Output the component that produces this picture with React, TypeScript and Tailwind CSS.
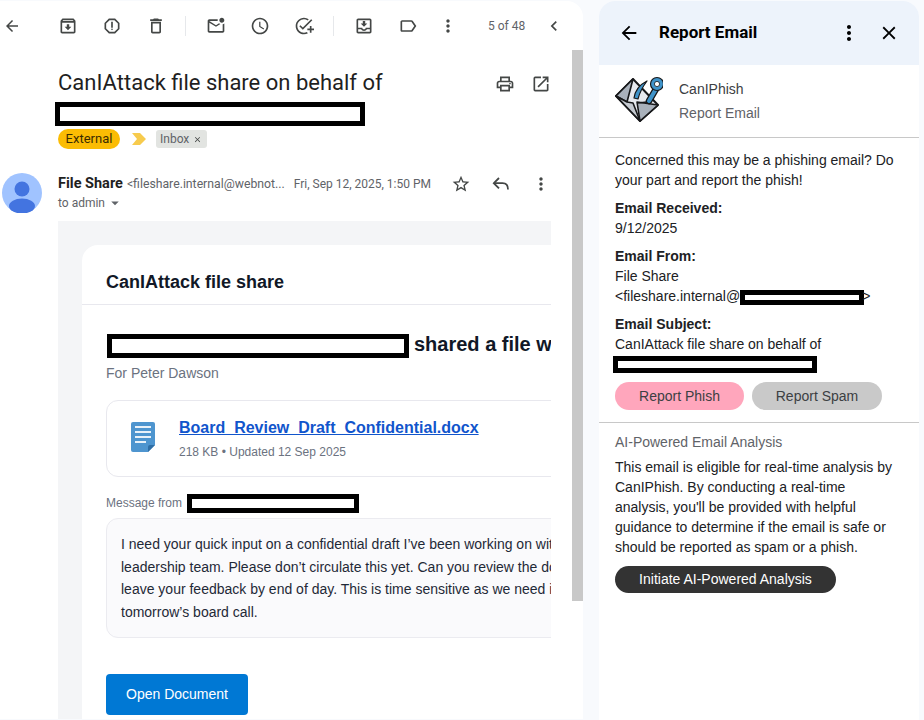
import React from 'react';
import {
  MdArrowBack,
  MdArrowDropDown,
  MdChevronLeft,
  MdClose,
  MdMoreVert,
  MdOpenInNew,
  MdOutlineAddTask,
  MdOutlineArchive,
  MdOutlineDelete,
  MdOutlineLabel,
  MdOutlineMarkEmailUnread,
  MdOutlineMoveToInbox,
  MdOutlinePrint,
  MdOutlineReport,
  MdOutlineWatchLater,
  MdStarBorder,
} from 'react-icons/md';

const ToolIcon: React.FC<{ icon: React.ElementType }> = ({ icon: Icon }) => (
  <div className="w-11 flex justify-center text-[#444746]">
    <Icon size={20} />
  </div>
);

const Avatar = () => (
  <svg width="40" height="40" viewBox="0 0 40 40" className="shrink-0">
    <circle cx="20" cy="20" r="20" fill="#a0c3ff" />
    <circle cx="20" cy="16" r="7.5" fill="#4374e0" />
    <ellipse cx="20" cy="33" rx="13" ry="7.5" fill="#4374e0" />
  </svg>
);

const DocIcon = () => (
  <svg width="24" height="30" viewBox="0 0 24 30" className="shrink-0">
    <path d="M2 0h20a2 2 0 0 1 2 2v21l-7 7H2a2 2 0 0 1-2-2V2a2 2 0 0 1 2-2z" fill="#4e95cf" />
    <path d="M24 23l-7 7v-5a2 2 0 0 1 2-2z" fill="#2f6ea5" />
    <path d="M4 5h16M4 10h16M4 15h16M4 20h11" stroke="#e8f1f9" strokeWidth="1.8" />
  </svg>
);

const ReplyIcon = () => (
  <svg width="20" height="20" viewBox="0 0 20 20" fill="none" stroke="#444746" strokeWidth="1.8">
    <path d="M8 4 2.8 9.2 8 14.4" />
    <path d="M3 9.2h8.5c3.2 0 5.5 2.2 5.5 6.3" />
  </svg>
);

const PhishLogo = () => (
  <svg width="50" height="48" viewBox="0 0 50 48" className="shrink-0">
    <path d="M20 4 3 21l24 25 18-16z" fill="#e6e9ee" stroke="#17181a" strokeWidth="2" strokeLinejoin="round" />
    <path d="M20 4 3 21l11 6z" fill="#a9b1bb" stroke="#17181a" strokeWidth="1.6" strokeLinejoin="round" />
    <path d="M3 21l24 25-7-18-6-1z" fill="#c5cad1" stroke="#17181a" strokeWidth="1.6" strokeLinejoin="round" />
    <path d="M27 46l18-16-21-3z" fill="#a9b1bb" stroke="#17181a" strokeWidth="1.6" strokeLinejoin="round" />
    <path d="M25 28l9-1" stroke="#17181a" strokeWidth="1.6" />
    <path d="M36 26 43 14" stroke="#17181a" strokeWidth="6.5" strokeLinecap="round" />
    <path d="M36 26 43 14" stroke="#3f93c9" strokeWidth="4" strokeLinecap="round" />
    <circle cx="44" cy="9" r="6.5" fill="#3f93c9" stroke="#17181a" strokeWidth="1.2" />
    <circle cx="44" cy="9" r="2.6" fill="#ffffff" stroke="#17181a" strokeWidth="0.8" />
    <path d="M21 23c1-7 5-13 13-17-3 4-7 10-9 18z" fill="#3f93c9" stroke="#17181a" strokeWidth="1.2" strokeLinejoin="round" />
  </svg>
);

const MailPane = () => (
  <section className="w-[583px] shrink-0 h-[718px] bg-white rounded-tr-2xl overflow-hidden flex flex-col font-['Roboto',sans-serif]">
    <div className="h-[49px] shrink-0 flex items-center">
      <div className="w-[24px] pl-[3px] text-[#444746]">
        <MdArrowBack size={18} />
      </div>
      <div className="ml-[22px] flex items-center">
        <ToolIcon icon={MdOutlineArchive} />
        <ToolIcon icon={MdOutlineReport} />
        <ToolIcon icon={MdOutlineDelete} />
        <div className="ml-[7px] mr-[8px] w-px h-5 bg-[#e6e8eb]" />
        <ToolIcon icon={MdOutlineMarkEmailUnread} />
        <ToolIcon icon={MdOutlineWatchLater} />
        <ToolIcon icon={MdOutlineAddTask} />
        <div className="ml-[7px] mr-[8px] w-px h-5 bg-[#e6e8eb]" />
        <ToolIcon icon={MdOutlineMoveToInbox} />
        <ToolIcon icon={MdOutlineLabel} />
        <div className="-ml-[4px]">
          <ToolIcon icon={MdMoreVert} />
        </div>
      </div>
      <span className="ml-[18px] text-[12px] text-[#5f6368]">5 of 48</span>
      <MdChevronLeft size={20} className="ml-[19px] text-[#444746]" />
    </div>

    <div className="flex flex-1 min-h-0">
      <div className="w-[572px] shrink-0 overflow-hidden">
        <div className="pl-[58px] pr-[21px] pt-[19px]">
          <div className="flex items-start justify-between">
            <h1 className="text-[22px] leading-[28px] text-[#1f1f1f]">CanIAttack file share on behalf of</h1>
            <div className="flex gap-4 pt-[5px] text-[#444746]">
              <MdOutlinePrint size={20} />
              <MdOpenInNew size={20} />
            </div>
          </div>
          <div className="-ml-[3px] mt-[5px] w-[310px] h-[24px] border-[5px] border-black bg-white" />
          <div className="mt-[3px] flex items-center h-[20px]">
            <span className="h-[20px] w-[62px] rounded-full bg-[#fbbc04] text-[13px] leading-[20px] text-center text-[#3c2c00]">External</span>
            <svg width="14" height="12" viewBox="0 0 14 12" className="ml-[12px]">
              <path d="M0 0h8l6 6-6 6H0l5-6z" fill="#f7cb4d" />
            </svg>
            <span className="ml-[10px] h-[18px] w-[51px] rounded-[3px] bg-[#e2e4e1] pl-[4px] text-[12px] leading-[18px] text-[#5f6368] flex items-center gap-1">
              Inbox
              <MdClose size={9} className="text-[#444746]" />
            </span>
          </div>
        </div>

        <div className="mt-[24px] flex pl-[2px] pr-[21px]">
          <Avatar />
          <div className="ml-[16px] pt-px flex-1 min-w-0">
            <div className="flex items-center h-[20px] whitespace-nowrap">
              <span className="text-[14.5px] font-bold text-[#1f1f1f]">File Share</span>
              <span className="ml-[4px] text-[12.25px] text-[#5f6368]">&lt;fileshare.internal@webnot...</span>
              <span className="ml-[9px] text-[12px] text-[#5f6368]">Fri, Sep 12, 2025, 1:50 PM</span>
              <div className="ml-auto flex items-center gap-[20px] text-[#444746]">
                <MdStarBorder size={20} />
                <ReplyIcon />
                <MdMoreVert size={20} />
              </div>
            </div>
            <div className="flex items-center text-[12px] leading-[18px] text-[#5f6368]">
              to admin
              <MdArrowDropDown size={18} className="ml-[1px]" />
            </div>
          </div>
        </div>

        <div className="ml-[58px] mt-[8px] w-[493px] h-[520px] overflow-hidden bg-[#f4f5f7] pl-[24px] pt-[24px] font-['Liberation_Sans',sans-serif]">
          <div className="w-[640px] h-[600px] bg-white rounded-t-2xl">
            <div className="h-[60px] border-b border-[#e8e8ee] pl-[24px] flex items-center pt-[16px] text-[18px] font-bold text-[#111827]">
              CanIAttack file share
            </div>
            <div className="px-[24px]">
              <div className="mt-[28px] flex items-center whitespace-nowrap text-[20px] font-bold text-[#111827]">
                <div className="ml-px w-[302px] h-[24px] border-[5px] border-black bg-white" />
                <span className="ml-[5px] -mt-[4px]">shared a file with you</span>
              </div>
              <p className="mt-[4px] text-[14px] leading-[20px] text-[#6b7280]">For Peter Dawson</p>
              <div className="mt-[17px] h-[77px] rounded-xl border border-[#e8e8ee] flex items-start pl-[24px] pt-[21px]">
                <DocIcon />
                <div className="ml-[24px] -mt-[6px]">
                  <a className="text-[16px] leading-[22px] font-bold text-[#1155cc] underline">Board_Review_Draft_Confidential.docx</a>
                  <p className="mt-[4px] text-[12px] leading-[16px] text-[#6b7280]">218 KB • Updated 12 Sep 2025</p>
                </div>
              </div>
              <div className="mt-[16px] flex items-center h-[20px] text-[12px] text-[#6b7280]">
                Message from
                <div className="ml-[5px] w-[172px] h-[19px] border-[5px] border-black bg-white" />
              </div>
              <div className="mt-[5px] h-[120px] rounded-xl border border-[#ebebf0] bg-[#fafafc] px-[14px] pt-[14px] text-[14px] leading-[22.6px] text-[#1f2937] whitespace-nowrap">
                I need your quick input on a confidential draft I’ve been working on with the<br />
                leadership team. Please don’t circulate this yet. Can you review the document and<br />
                leave your feedback by end of day. This is time sensitive as we need it for<br />
                tomorrow’s board call.
              </div>
              <div className="mt-[36px] w-[142px] h-[41px] rounded bg-[#0078d4] text-white text-[14px] flex items-center justify-center">
                Open Document
              </div>
            </div>
          </div>
        </div>
      </div>
      <div className="w-[11px] h-[551px] bg-[#c8c8c8]" />
    </div>
  </section>
);

const Redaction: React.FC<{ className: string }> = ({ className }) => (
  <span className={`inline-block border-[5px] border-black bg-white align-middle ${className}`} />
);

const ReportPane = () => (
  <aside className="ml-[16px] w-[320px] shrink-0 h-[719px] bg-white rounded-t-2xl overflow-hidden font-['Liberation_Sans',sans-serif] text-[14px] leading-[20px] text-[#202124]">
    <header className="h-[64px] bg-[#edf3fb] flex items-center pb-[1px]">
      <MdArrowBack size={22} className="ml-[19px] text-black" />
      <h2 className="ml-[19px] pb-[2px] text-[17px] font-bold text-black font-['Roboto',sans-serif]">Report Email</h2>
      <MdMoreVert size={24} className="ml-auto text-black" />
      <MdClose size={22} className="ml-[17px] mr-[19px] text-black" />
    </header>
    <div className="h-[73px] border-b border-[#c8c8c8] flex pl-[14px] pt-[10px]">
      <PhishLogo />
      <div className="ml-[16px] pt-[4px]">
        <p className="h-[24px] text-[#3c4043]">CanIPhish</p>
        <p className="text-[#5f6368]">Report Email</p>
      </div>
    </div>
    <div className="px-[16px] pt-[12px] h-[285px] border-b border-[#c8c8c8]">
      <p>Concerned this may be a phishing email? Do your part and report the phish!</p>
      <p className="mt-[8px] font-bold">Email Received:</p>
      <p>9/12/2025</p>
      <p className="mt-[8px] font-bold">Email From:</p>
      <p>File Share</p>
      <p className="whitespace-nowrap">&lt;fileshare.internal@<Redaction className="w-[124px] h-[15px]" /><span className="-ml-[2px]">&gt;</span></p>
      <p className="mt-[8px] font-bold">Email Subject:</p>
      <p>CanIAttack file share on behalf of</p>
      <div className="-ml-[2px] mt-[2px] w-[204px] h-[17px] border-[5px] border-black bg-white" />
      <div className="mt-[9px] flex gap-[8px] text-[#3c4043]">
        <div className="w-[129px] h-[28px] rounded-full bg-[#ffa6bc] flex items-center justify-center">Report Phish</div>
        <div className="w-[130px] h-[28px] rounded-full bg-[#c9c9c9] flex items-center justify-center">Report Spam</div>
      </div>
    </div>
    <div className="px-[16px] pt-[9px]">
      <p className="text-[#5f6368]">AI-Powered Email Analysis</p>
      <p className="mt-[5px]">
        This email is eligible for real-time analysis by CanIPhish. By conducting a real-time analysis, you'll be provided with helpful guidance to determine if the email is safe or should be reported as spam or a phish.
      </p>
      <div className="mt-[9px] w-[221px] h-[27px] pb-[2px] rounded-full bg-[#333333] text-white flex items-center justify-center">
        Initiate AI-Powered Analysis
      </div>
    </div>
  </aside>
);

export default function App() {
  return (
    <div className="w-[924px] h-[720px] overflow-hidden bg-[#f8fafd] pt-px flex items-start">
      <MailPane />
      <ReportPane />
    </div>
  );
}
